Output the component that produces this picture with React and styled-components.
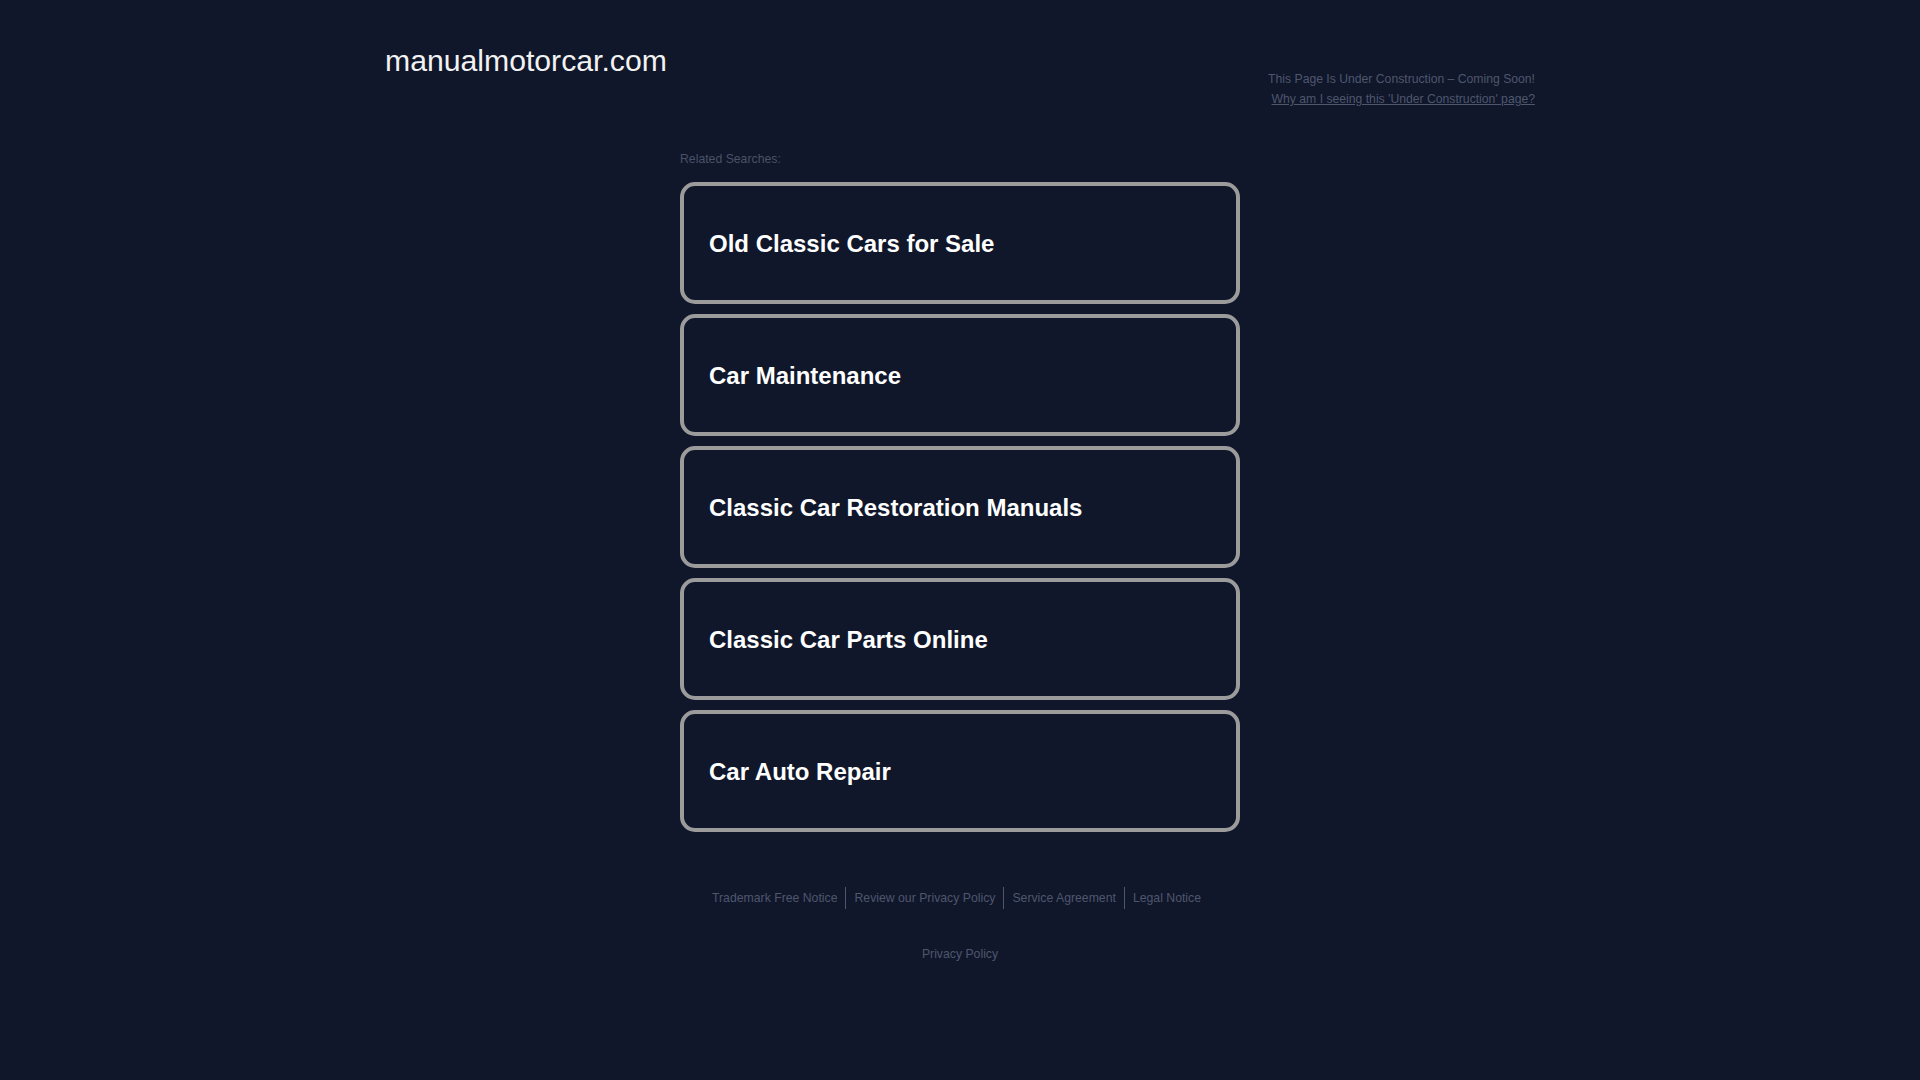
import React from "react";
import styled, { createGlobalStyle } from "styled-components";

const GlobalStyle = createGlobalStyle`
  html, body {
    margin: 0;
    padding: 0;
    background-color: #10172a;
    font-family: "Liberation Sans", Arial, sans-serif;
  }
`;

const Page = styled.div`
  min-height: 1080px;
  background-color: #10172a;
`;

const Header = styled.header`
  width: 1150px;
  margin: 0 auto;
  padding-top: 43px;
  display: flex;
  justify-content: space-between;
  align-items: flex-start;
`;

const Domain = styled.h1`
  margin: 0;
  font-size: 30.2px;
  line-height: 36px;
  font-weight: normal;
  color: #f2f2f2;
`;

const Notice = styled.div`
  margin-top: 26px;
  text-align: right;
  font-size: 12.2px;
  line-height: 20px;
  color: #4e566e;
`;

const NoticeLink = styled.a`
  color: #4e566e;
  text-decoration: underline;
  cursor: pointer;
`;

const Main = styled.main`
  width: 560px;
  margin: 40px auto 0;
`;

const Label = styled.div`
  font-size: 12.25px;
  line-height: 20px;
  color: #4a5168;
`;

const List = styled.div`
  margin-top: 13px;
  display: flex;
  flex-direction: column;
  gap: 10px;
`;

const Card = styled.a`
  box-sizing: border-box;
  height: 122px;
  display: flex;
  align-items: center;
  padding: 2px 25px 0;
  border: 4px solid #9b9b9b;
  border-radius: 15px;
  color: #ffffff;
  font-size: 24px;
  font-weight: bold;
  text-decoration: none;
  cursor: pointer;
`;

const Footer = styled.footer`
  margin-top: 55px;
  display: flex;
  flex-direction: column;
  align-items: center;
  gap: 35px;
`;

const LinkRow = styled.div`
  display: flex;
  justify-content: center;
  padding-right: 7px;
`;

const FooterLink = styled.a`
  font-size: 12.25px;
  line-height: 22px;
  padding: 0 8px;
  color: #4e566e;
  text-decoration: none;
  border-left: ${(p) => (p.$first ? "none" : "1px solid #4e566e")};
  cursor: pointer;
`;

const Bottom = styled.a`
  font-size: 12.25px;
  line-height: 20px;
  color: #4e566e;
  text-decoration: none;
`;

const searches = [
  "Old Classic Cars for Sale",
  "Car Maintenance",
  "Classic Car Restoration Manuals",
  "Classic Car Parts Online",
  "Car Auto Repair",
];

const links = [
  "Trademark Free Notice",
  "Review our Privacy Policy",
  "Service Agreement",
  "Legal Notice",
];

const App = () => {
  return (
    <Page>
      <GlobalStyle />
      <Header>
        <Domain>manualmotorcar.com</Domain>
        <Notice>
          <div>This Page Is Under Construction – Coming Soon!</div>
          <NoticeLink>Why am I seeing this 'Under Construction' page?</NoticeLink>
        </Notice>
      </Header>
      <Main>
        <Label>Related Searches:</Label>
        <List>
          {searches.map((s) => (
            <Card key={s}>{s}</Card>
          ))}
        </List>
        <Footer>
          <LinkRow>
            {links.map((l, i) => (
              <FooterLink key={l} $first={i === 0}>
                {l}
              </FooterLink>
            ))}
          </LinkRow>
          <Bottom>Privacy Policy</Bottom>
        </Footer>
      </Main>
    </Page>
  );
};

export default App;
